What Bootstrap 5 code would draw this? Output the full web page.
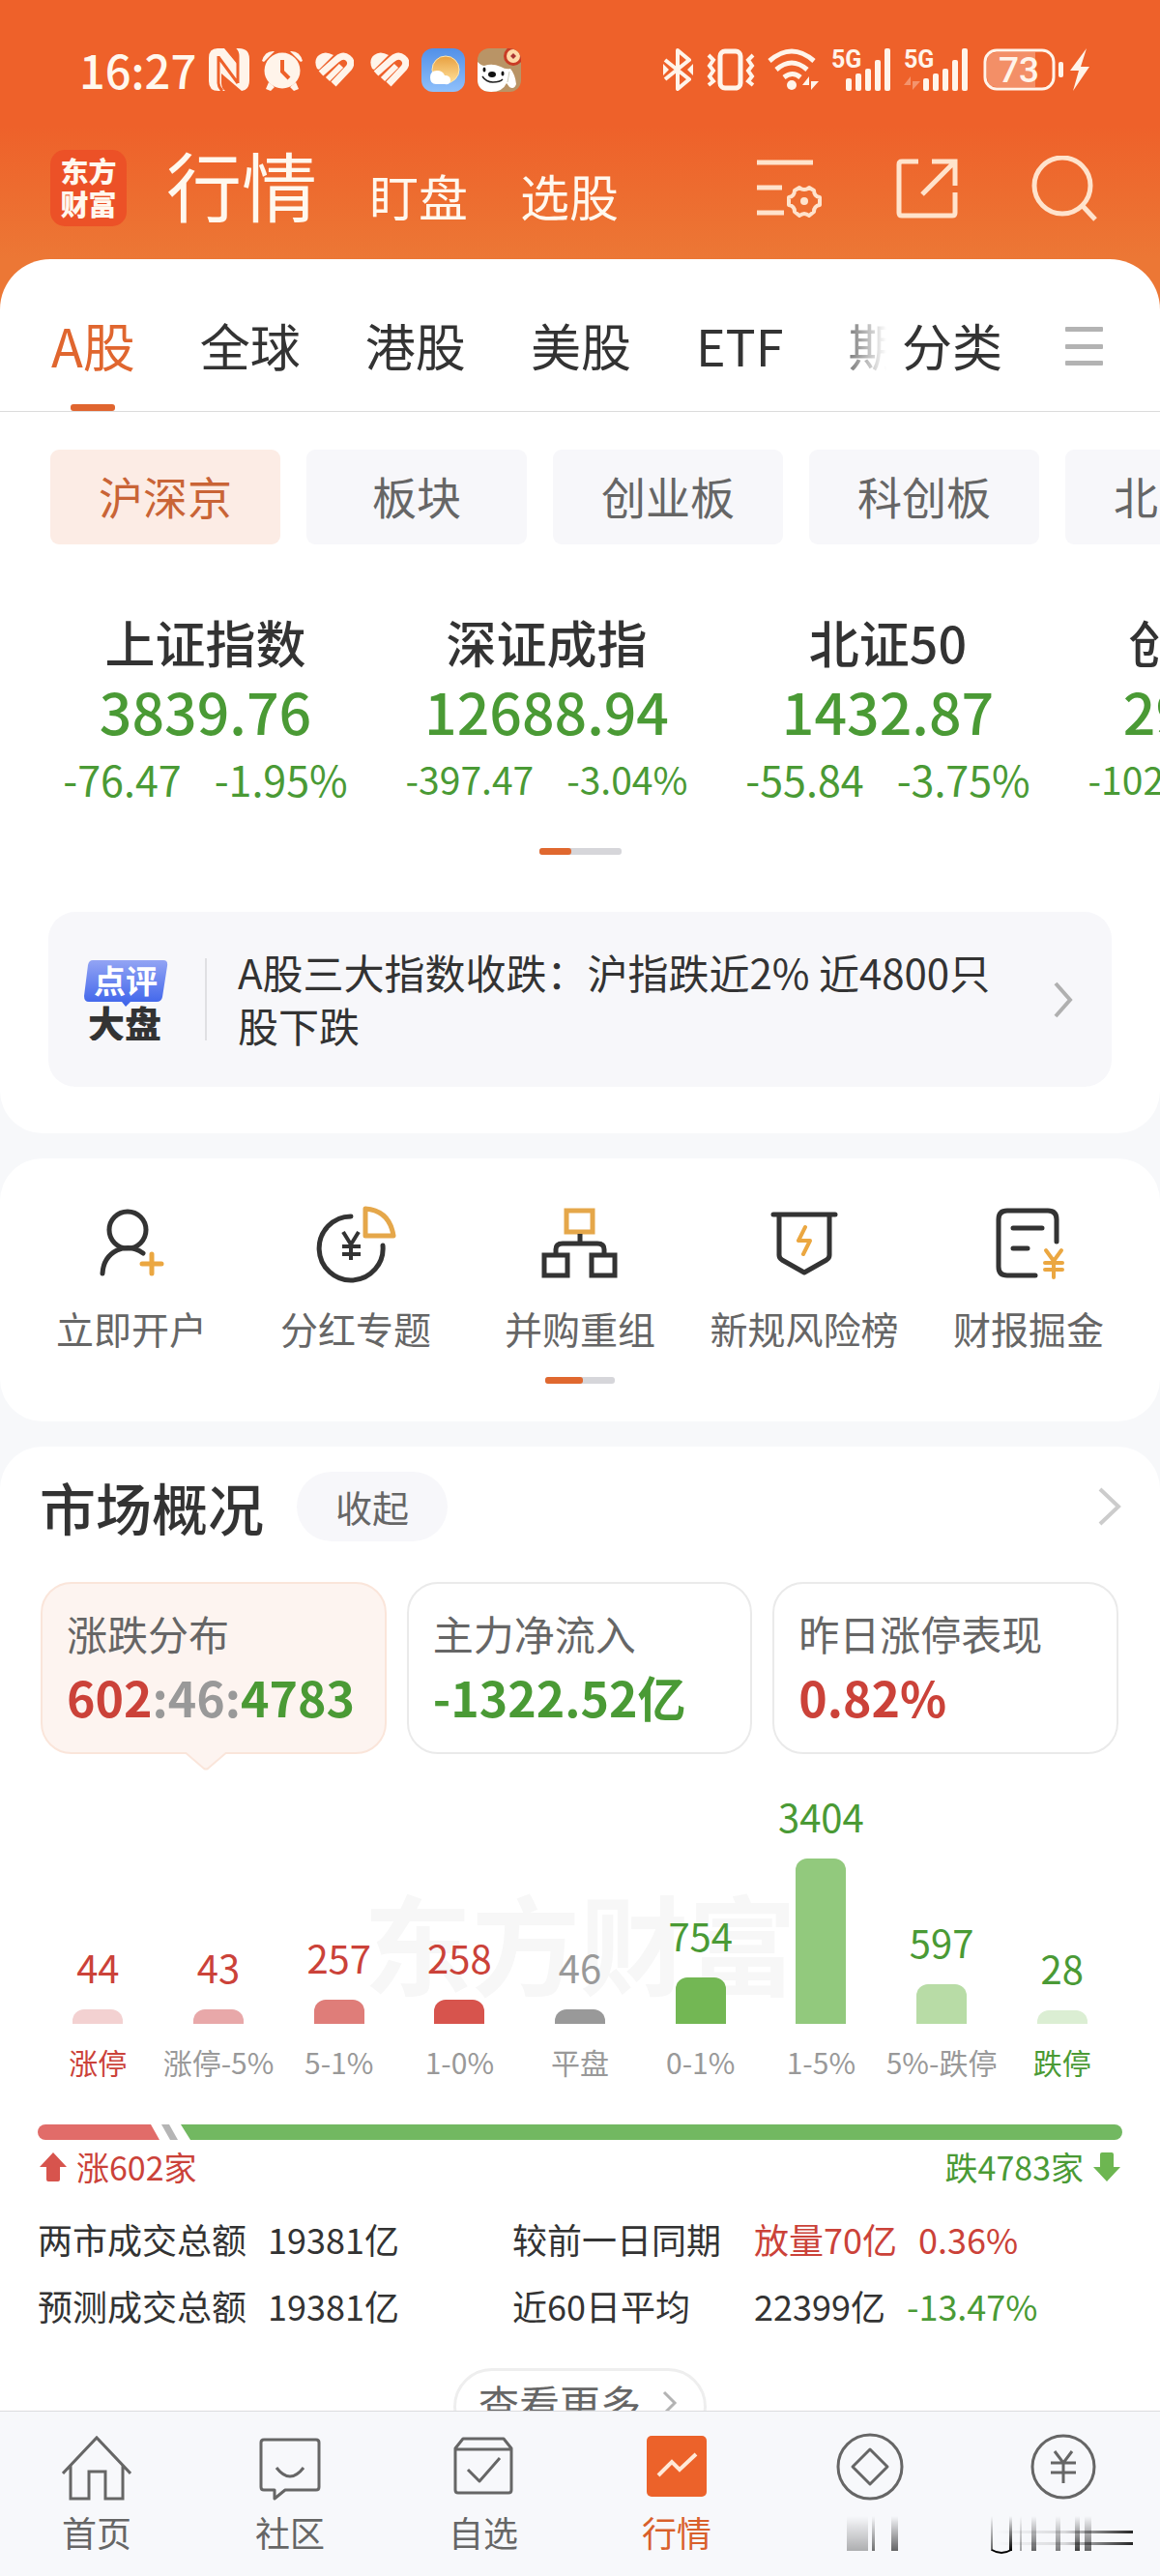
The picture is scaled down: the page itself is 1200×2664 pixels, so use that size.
<!DOCTYPE html>
<html lang="zh-CN">
<head>
<meta charset="utf-8">
<meta name="viewport" content="width=device-width, initial-scale=1">
<title>行情</title>
<link href="https://cdn.jsdelivr.net/npm/bootstrap@5.3.0/dist/css/bootstrap.min.css" rel="stylesheet">
<style>
:root{--ink:#333;--soft:#666;--brand:#e0662f;--up:#cb4239;--down:#4a9a35;--pale:#f7f7fa}
body{font-family:"Noto Sans CJK SC","Noto Sans",sans-serif;color:var(--ink);background:#f7f8fa;overflow-x:hidden}
a{color:inherit;text-decoration:none}
button{color:inherit;background:none;border:0;padding:0}
svg{display:block;flex:none}
.up{color:var(--up)}.down{color:var(--down)}.flat{color:#999}
.topbar{background:linear-gradient(#ee612a 0,#ee612a 130px,#ec7735 268px,#ec7735);color:#fff8ee;padding-bottom:60px;margin-bottom:-60px}
.status{height:144px;padding:0 73px 0 82px;gap:13px;font-size:47px;font-weight:500;line-height:60px}
.apphead{height:124px;padding:11px 65px 34px 52px}
.brandmark{width:79px;height:79px;border-radius:15px;background:#ec5127;font-size:29px;line-height:34px;font-weight:900;text-align:center;padding-top:4px}
.sections{gap:54px;margin-left:41px;padding-top:2px;font-size:51px;line-height:72px}
.sections .current{font-size:78px}
.tools{gap:76px}
.panel{background:#fff;border-radius:44px}
.market{border-radius:52px 52px 44px 44px}
.tabs{border-bottom:1px solid #dcdcdc;padding:0 59px 0 53px;height:158px;font-size:52px;line-height:60px}
.tabs button{padding-top:24px}
.tablist{gap:67px;overflow:hidden;flex:1 1 0;min-width:0;-webkit-mask-image:linear-gradient(90deg,#000 93%,transparent);mask-image:linear-gradient(90deg,#000 93%,transparent)}
.tablist a,.tabs .sorts{padding:59px 0 38px;white-space:nowrap}
.tablist .active{font-size:54px;color:var(--brand);position:relative}
.tablist .active::after{content:"";position:absolute;bottom:0;left:50%;width:46px;height:7px;margin-left:-23px;border-radius:3px;background:#e0652f}
.sorts{margin:0 65px 0 16px}
.chips{gap:27px;padding:39px 0 0 52px;overflow:hidden}
.chip{flex:none;min-width:228px;height:98px;padding:0 50px 4px;border-radius:9px;background:var(--pale);color:var(--soft);font-size:46px;line-height:60px;text-align:center}
.chip.active{background:#fcece5;color:#c96436}
.indices{padding:66px 0 0 36px;overflow:hidden}
.index{flex:none;width:353px;text-align:center;white-space:nowrap}
.index .title{font-size:52px;line-height:70px;font-weight:500;color:var(--ink)}
.index .value{font-size:59px;line-height:72px;font-weight:500}
.index .delta{font-size:43px;line-height:68px;gap:34px}
.index .delta.long{font-size:39px}
.pager{width:85px;height:7px;border-radius:3px;background:#d6d6da;margin:38px auto 0}
.pager i{display:block;width:33px;height:7px;border-radius:3px;background:#e0682f}
.review{margin:59px 50px 0;height:181px;border-radius:28px;background:var(--pale);padding:0 39px 0 36px}
.reviewmark{width:88px;height:84px}
.headline{font-size:42px;line-height:55px;border-left:2px solid #e0e0e3;padding-left:32px;margin:0 50px 0 38px;min-height:85px}
.headline span{display:block;margin:-14px 0 -11px}
.entries{margin-top:26px;padding:46px 20px 39px}
.entries a{flex:1 1 0;color:var(--soft);font-size:39px;line-height:50px;text-align:center;white-space:nowrap}
.entries svg{margin:0 auto 20px}
.short{width:72px;margin-top:26px}
.short i{width:39px}
.overview{margin-top:26px;padding:26px 39px 140px}
.overview h2{font-size:58px;line-height:72px;font-weight:500;margin:0 34px 0 2px}
.fold{width:156px;height:72px;border-radius:36px;background:var(--pale);color:var(--soft);font-size:38px;line-height:68px}
.cells{gap:21px;margin:42px 4px 0 3px}
.cell{flex:1 1 0;height:178px;padding:0 0 2px 25px;border:2px solid #eaeaea;border-radius:32px;position:relative;text-align:left;white-space:nowrap}
.cell .name{display:block;font-size:42px;line-height:50px;color:var(--soft)}
.cell .sum{display:block;font-size:50px;line-height:60px;margin-top:10px;font-weight:700}
.cell.active{background:#fdf4f0;border-color:#fae5da}
.cell svg{position:absolute;left:50%;top:174px;margin-left:-31px}
.chart{margin-top:40px;position:relative}
.stamp{position:absolute;left:0;right:0;top:78px;text-align:center;font-size:112px;line-height:150px;font-weight:700;color:#f7f7f7}
.slot{flex:1 1 0;position:relative;text-align:center;white-space:nowrap}
.slot b{display:block;font-size:40px;line-height:48px;font-weight:400}
.slot i{display:block;width:52px;margin:20px auto 19px;border-radius:12px 12px 0 0}
.slot span{display:block;margin:0 -20px;font-size:30px;line-height:40px}
.breadth{margin-top:45px;height:16px}
.breadth .rise{width:126px;background:#e16c69;border-radius:8px 0 0 8px;clip-path:polygon(0 0,117px 0,100% 100%,0 100%)}
.breadth .even{width:17px;margin-left:2px;background:#b5b5b5;clip-path:polygon(0 0,8px 0,100% 100%,9px 100%)}
.breadth .fall{flex:1;margin-left:3px;background:#72b861;border-radius:0 8px 8px 0;clip-path:polygon(0 0,100% 0,100% 100%,10px 100%)}
.counts{margin-top:6px;font-size:34px;line-height:44px;padding:0 2px}
.counts div{gap:10px}
.stats{width:100%;margin-top:18px;font-size:36px;line-height:69px;white-space:nowrap;table-layout:fixed}
.stats th{font-weight:400}.stats th,.stats td{padding:0}
.stats span{margin-right:22px}
.more{display:flex;align-items:center;margin:30px auto 0;width:262px;height:80px;border:3px solid #eee;border-radius:40px;color:var(--soft);font-size:42px;line-height:64px;padding:0 0 8px 23px;gap:22px}
.dock{background:#f7f8fb;border-top:1px solid #dcdcdf;height:171px;padding-top:22px}
.dock a{flex:1 1 0;text-align:center;color:var(--soft);font-size:36px;line-height:44px}
.dock a.active{color:#d9602b}
.dock a svg{margin:0 auto 8px}
.smear{position:absolute;right:24px;top:107px}
</style>
</head>
<body>
<header class="topbar">
  <div class="status d-flex align-items-center">
    <span>16:27</span>
    <svg width="42" height="44" viewBox="0 0 42 44" fill="#fff4ea"><path d="M9 0h7l14 17V8q0-5-4-8h5q11 0 11 11v22q0 10-8 11L13 26v10q0 5 4 8H10Q0 44 0 34V10Q0 0 9 0z"/><path d="M10 8v28q0 4 4 8M30 36V8q0-5-4-8M10 9l20 27" fill="none" stroke="#ee612a" stroke-width="3"/></svg>
    <svg width="42" height="44" viewBox="0 0 42 44"><g fill="#fff4ea"><circle cx="21" cy="23" r="18.500"/><path d="M0 13Q3 2 13 3L2 14zM42 13Q39 2 29 3l11 11zM7 35l6 5-4 4-5-2zM35 35l-6 5 4 4 5-2z"/></g><path d="M21 12v12l7 7" fill="none" stroke="#ee612a" stroke-width="4"/></svg>
    <svg width="40" height="36" viewBox="0 0 40 36"><path d="M2 17Q-2 8 4 3T19 3L4 18z" fill="#fff4ea"/><path d="M6 22L23 7q6-5 11-1t1 10L19 33" fill="none" stroke="#fff4ea" stroke-width="7"/><path d="M13 28l14-14" stroke="#fff4ea" stroke-width="6"/></svg>
    <svg width="40" height="36" viewBox="0 0 40 36" class="ms-1"><path d="M2 17Q-2 8 4 3T19 3L4 18z" fill="#fff4ea"/><path d="M6 22L23 7q6-5 11-1t1 10L19 33" fill="none" stroke="#fff4ea" stroke-width="7"/><path d="M13 28l14-14" stroke="#fff4ea" stroke-width="6"/></svg>
    <svg width="45" height="45" viewBox="0 0 45 45"><defs><linearGradient id="sky" x2="0" y2="1"><stop stop-color="#5290e8"/><stop offset="1" stop-color="#8fc0fb"/></linearGradient><linearGradient id="sun" x2="0" y2="1"><stop stop-color="#e8a040"/><stop offset="1" stop-color="#ffe09a"/></linearGradient></defs><rect width="45" height="45" rx="12" fill="url(#sky)"/><circle cx="25" cy="22" r="14" fill="url(#sun)" stroke="#ffe7b0"/><path d="M15 37q-6 0-6-7t7-7q6 0 8 5 6 0 6 5t-6 4z" fill="#fff"/></svg>
    <svg width="45" height="45" viewBox="0 0 45 45"><defs><clipPath id="sq"><rect width="45" height="45" rx="12"/></clipPath></defs><g clip-path="url(#sq)"><path d="M0 0h45v45H0z" fill="#b99466"/><path d="M0 14q4 4 7 4 8-3 17 1 5 3 10 2 5 6 6 16-2 6-7 3l-3-4q-4 9-16 9T0 38z" fill="#fff"/><path d="M33 24l-2 11" stroke="#ccb" stroke-width="1"/><circle cx="37" cy="8" r="10" fill="#c93b25"/><circle cx="37" cy="8" r="7" fill="#ffd9a8"/><path d="M37 5l3 3-3 3-3-3z" fill="#a33"/><ellipse cx="15" cy="27" rx="4" ry="3" fill="#111"/><ellipse cx="7" cy="22" rx="1.500" ry="2.500" fill="#111"/><ellipse cx="26" cy="26" rx="1.500" ry="2.500" fill="#111"/><path d="M5 29q4 6 11 6 7 0 10-3" fill="none" stroke="#222" stroke-width="1.500"/></g></svg>
    <svg class="ms-auto" width="33" height="44" viewBox="0 0 33 44" fill="none" stroke="#fff4ea" stroke-width="4" stroke-linejoin="round"><path d="M3 12l25 20-12 10V2l12 10L3 32"/><path d="M1 16v12l6-6zM32 16v12l-6-6z" fill="#fff4ea" stroke="none"/></svg>
    <svg width="50" height="44" viewBox="0 0 50 44" fill="none" stroke="#fff4ea"><rect x="14" y="3" width="21" height="38" rx="5" stroke-width="5"/><path d="M2 7l5 5-4 6 4 5-4 6 4 5-5 4M48 7l-5 5 4 6-4 5 4 6-4 5 5 4" stroke-width="4"/></svg>
    <svg width="53" height="44" viewBox="0 0 53 44" fill="none" stroke="#fff4ea" stroke-width="5"><path d="M2 13q23-20 46 0M9 22q16-14 32 0M17 30q9-7 17 0"/><circle cx="25" cy="38" r="5" fill="#fff4ea" stroke="none"/><path d="M36 38h7V29zM45 32v11l8-9h-8z" fill="#fff4ea" stroke="none"/></svg>
    <svg width="62" height="44" viewBox="0 0 62 44" fill="#fff4ea"><text x="0" y="20" font-size="25" font-weight="700" font-family="Roboto,sans-serif">5G</text><rect x="15" y="31" width="6" height="13" rx="2"/><rect x="25" y="26" width="6" height="18" rx="2"/><rect x="35" y="21" width="6" height="23" rx="2"/><rect x="45" y="12" width="6" height="32" rx="2"/><rect x="55" width="6" height="44" rx="2"/></svg>
    <svg width="69" height="44" viewBox="0 0 69 44" fill="#fff4ea"><text x="0" y="20" font-size="25" font-weight="700" font-family="Roboto,sans-serif">5G</text><path d="M0 38h7V29zM9 32v11l8-9H9z" opacity=".35"/><rect x="20" y="31" width="6" height="13" rx="2"/><rect x="30" y="26" width="6" height="18" rx="2"/><rect x="40" y="21" width="6" height="23" rx="2"/><rect x="50" y="12" width="6" height="32" rx="2"/><rect x="60" width="6" height="44" rx="2"/></svg>
    <svg width="110" height="44" viewBox="0 0 110 44" fill="#fff4ea"><path d="M14 4h40v36H14Q4 40 4 30V14Q4 4 14 4z" opacity=".32"/><rect x="2" y="2" width="71" height="40" rx="12" fill="none" stroke="#fff4ea" stroke-width="3"/><text x="16" y="35" font-size="37" font-weight="500" font-family="Roboto,sans-serif">73</text><rect x="78" y="14" width="5" height="16" rx="2"/><path d="M107 0L90 23h9l-6 21 17-25h-9z"/></svg>
  </div>
  <div class="apphead d-flex align-items-center">
    <div class="brandmark">东方<br>财富</div>
    <nav class="sections d-flex align-items-baseline"><a class="current" href="#">行情</a><a href="#">盯盘</a><a href="#">选股</a></nav>
    <div class="tools d-flex align-items-center ms-auto">
      <button aria-label="设置"><svg width="68" height="68" viewBox="0 0 68 68" fill="none" stroke="#ffe3cc" stroke-width="5"><path d="M0 7h58M0 33h26M0 59h28"/><path d="M44 33q5 4 10 0l5 3q0 6 6 7v8q-6 1-6 7l-5 4q-5-4-10 0l-5-4q0-6-6-7v-8q6-1 6-7z" stroke-width="4" stroke-linejoin="round"/><circle cx="49" cy="47" r="4" fill="#ffe3cc" stroke="none"/></svg></button>
      <button aria-label="分享"><svg width="64" height="68" viewBox="0 0 64 68" fill="none" stroke="#ffe3cc" stroke-width="5"><path d="M23 6H6q-3 0-3 3v50q0 3 3 3h52q3 0 3-3V38M37 6h24v25M61 6L27 40"/></svg></button>
      <button aria-label="搜索"><svg width="68" height="68" viewBox="0 0 68 68" fill="none" stroke="#ffe3cc" stroke-width="5"><circle cx="32" cy="31" r="29"/><path d="M53 52l13 14"/></svg></button>
    </div>
  </div>
</header>

<main>
<section class="panel market position-relative pb-5">
  <nav class="tabs d-flex align-items-center">
    <div class="tablist d-flex align-items-center"><a class="active" href="#">A股</a><a href="#">全球</a><a href="#">港股</a><a href="#">美股</a><a href="#">ETF</a><a href="#">期货</a></div>
    <a class="sorts" href="#">分类</a>
    <button aria-label="菜单"><svg width="39" height="42" viewBox="0 0 39 42" fill="#b3b3b3"><rect width="39" height="5" rx="1"/><rect y="18" width="39" height="5" rx="1"/><rect y="35" width="39" height="5" rx="1"/></svg></button>
  </nav>
  <div class="chips d-flex"><button class="chip active">沪深京</button><button class="chip">板块</button><button class="chip">创业板</button><button class="chip">科创板</button><button class="chip">北交所</button></div>
  <div class="indices d-flex">
    <a href="#" class="index down"><div class="title">上证指数</div><div class="value">3839.76</div><div class="delta d-flex justify-content-center"><span>-76.47</span><span>-1.95%</span></div></a>
    <a href="#" class="index down"><div class="title">深证成指</div><div class="value">12688.94</div><div class="delta long d-flex justify-content-center"><span>-397.47</span><span>-3.04%</span></div></a>
    <a href="#" class="index down"><div class="title">北证50</div><div class="value">1432.87</div><div class="delta d-flex justify-content-center"><span>-55.84</span><span>-3.75%</span></div></a>
    <a href="#" class="index down"><div class="title">创业板指</div><div class="value">2935.37</div><div class="delta long d-flex justify-content-center"><span>-102.49</span><span>-3.36%</span></div></a>
  </div>
  <div class="pager"><i></i></div>
  <a href="#" class="review d-flex align-items-center">
    <svg class="reviewmark" viewBox="0 0 88 84"><defs><linearGradient id="blue" x2="0" y2="1"><stop stop-color="#93a4f4"/><stop offset="1" stop-color="#3b62ea"/></linearGradient></defs><path d="M10 1h73q5 0 4 6l-5 32q-1 5-6 5H49l-5 5-4-5H6q-5 0-5-6L5 6q1-5 5-5z" fill="url(#blue)"/><text x="11" y="35" font-size="33" font-weight="700" fill="#fff">点评</text><text x="5" y="81" font-size="38" font-weight="900" fill="#333">大盘</text></svg>
    <div class="headline d-flex align-items-center"><span>A股三大指数收跌：沪指跌近2% 近4800只股下跌</span></div>
    <svg class="ms-auto" width="22" height="38" viewBox="0 0 22 38" fill="none" stroke="#b0b0b0" stroke-width="4"><path d="M3 2l15 17L3 36"/></svg>
  </a>
</section>

<section class="panel entries">
  <div class="d-flex">
    <a href="#"><svg width="84" height="84" viewBox="0 0 84 84" fill="none" stroke="#333" stroke-width="5" stroke-linecap="round"><circle cx="38" cy="28" r="19"/><path d="M12 73q1-17 15-24 14-6 27 3"/><path d="M63 53v20M53 63h20" stroke="#eba741"/></svg>立即开户</a>
    <a href="#"><svg width="84" height="84" viewBox="0 0 84 84" fill="none" stroke="#333" stroke-width="5"><path d="M37 14A33 33 0 1 0 70 44" stroke-linecap="round"/><path d="M52 6q25 2 29 28H52z" stroke="#e5a74a" stroke-linejoin="round"/><path d="M29 30l8 13 8-13M28 45h19M28 53h19M37 43v16" stroke-width="4"/></svg>分红专题</a>
    <a href="#"><svg width="84" height="84" viewBox="0 0 84 84" fill="none" stroke="#333" stroke-width="5"><path d="M28 8h27v22H28z" stroke="#e5a74a"/><path d="M42 32v9M17 53v-5q0-6 7-6h36q7 0 7 6v5M5 54h24v21H5zM54 54h24v21H54z"/></svg>并购重组</a>
    <a href="#"><svg width="84" height="84" viewBox="0 0 84 84" fill="none" stroke="#333" stroke-width="5" stroke-linecap="round" stroke-linejoin="round"><path d="M10 12h64M16 13v41q0 3 3 5l23 13 23-13q3-2 3-5V13"/><path d="M43 25l-7 14h12l-7 14" stroke="#eba741" stroke-width="4"/></svg>新规风险榜</a>
    <a href="#"><svg width="84" height="84" viewBox="0 0 84 84" fill="none" stroke="#333" stroke-width="5" stroke-linecap="round"><path d="M71 40V17q0-9-9-9H20q-9 0-9 9v49q0 9 9 9h29M26 26h30M26 47h15"/><path d="M60 49l8 11 8-11M59 62h18M59 69h18M68 60v17" stroke="#eba741" stroke-width="4"/></svg>财报掘金</a>
  </div>
  <div class="pager short"><i></i></div>
</section>

<section class="panel overview">
  <div class="d-flex align-items-center"><h2>市场概况</h2><button class="fold">收起</button><a href="#" class="ms-auto" aria-label="更多"><svg width="26" height="40" viewBox="0 0 26 40" fill="none" stroke="#ccc" stroke-width="4"><path d="M3 2l19 18L3 38"/></svg></a></div>
  <div class="cells d-flex">
    <button class="cell active"><span class="name">涨跌分布</span><span class="sum"><span class="up">602</span><span class="flat">:46:</span><span class="down">4783</span></span><svg width="46" height="20" viewBox="0 0 46 20" fill="#fdf4f0" stroke="#fae5da" stroke-width="2"><path d="M0-1l21 18q2 1 4 0L46-1"/></svg></button>
    <button class="cell"><span class="name">主力净流入</span><span class="sum down">-1322.52亿</span></button>
    <button class="cell"><span class="name">昨日涨停表现</span><span class="sum up">0.82%</span></button>
  </div>
  <div class="chart d-flex align-items-end">
    <div class="stamp" aria-hidden="true">东方财富</div>
    <div class="slot up"><b>44</b><i style="height:15px;background:#f3d1d1"></i><span>涨停</span></div>
    <div class="slot up"><b>43</b><i style="height:15px;background:#e8a8a9"></i><span class="flat">涨停-5%</span></div>
    <div class="slot up"><b>257</b><i style="height:25px;background:#df7d79"></i><span class="flat">5-1%</span></div>
    <div class="slot up"><b>258</b><i style="height:25px;background:#d7544d"></i><span class="flat">1-0%</span></div>
    <div class="slot flat"><b>46</b><i style="height:15px;background:#999"></i><span>平盘</span></div>
    <div class="slot down"><b>754</b><i style="height:48px;background:#73b754"></i><span class="flat">0-1%</span></div>
    <div class="slot down"><b>3404</b><i style="height:171px;background:#92c97d"></i><span class="flat">1-5%</span></div>
    <div class="slot down"><b>597</b><i style="height:41px;background:#b8dca6"></i><span class="flat">5%-跌停</span></div>
    <div class="slot down"><b>28</b><i style="height:14px;background:#dbeed3"></i><span>跌停</span></div>
  </div>
  <div class="breadth d-flex"><div class="rise"></div><div class="even"></div><div class="fall"></div></div>
  <div class="counts d-flex justify-content-between">
    <div class="d-flex align-items-center up"><svg width="28" height="30" viewBox="0 0 28 30" fill="#d7544d"><path d="M14 0l14 15h-7v13q0 2-2 2H9q-2 0-2-2V15H0z"/></svg>涨602家</div>
    <div class="d-flex align-items-center down">跌4783家<svg width="28" height="30" viewBox="0 0 28 30" fill="#6db651"><path d="M14 30L0 15h7V2q0-2 2-2h10q2 0 2 2v13h7z"/></svg></div>
  </div>
  <table class="stats">
    <colgroup><col style="width:238px"><col style="width:253px"><col style="width:250px"><col></colgroup>
    <tbody>
    <tr><th scope="row">两市成交总额</th><td>19381亿</td><th scope="row">较前一日同期</th><td class="up"><span>放量70亿</span>0.36%</td></tr>
    <tr><th scope="row">预测成交总额</th><td>19381亿</td><th scope="row">近60日平均</th><td><span>22399亿</span><b class="down fw-normal">-13.47%</b></td></tr>
    </tbody>
  </table>
  <button class="more">查看更多<svg width="16" height="26" viewBox="0 0 16 26" fill="none" stroke="#b3b3b3" stroke-width="3"><path d="M2 2l11 11L2 24"/></svg></button>
</section>
</main>

<nav class="dock fixed-bottom d-flex">
  <a href="#"><svg width="72" height="72" viewBox="0 0 72 72" fill="none" stroke="#666" stroke-width="3"><path d="M1 42L36 5l35 37M9 34v34h19V40h17v28h18V34"/></svg>首页</a>
  <a href="#"><svg width="72" height="72" viewBox="0 0 72 72" fill="none" stroke="#666" stroke-width="3" stroke-linejoin="round"><path d="M9 7h54q3 0 3 3v46q0 3-3 3H31l-11 9v-9H9q-3 0-3-3V10q0-3 3-3zM22 36q14 18 28 0"/></svg>社区</a>
  <a href="#"><svg width="72" height="72" viewBox="0 0 72 72" fill="none" stroke="#666" stroke-width="3" stroke-linejoin="round"><path d="M7 16l8-10h42l8 10v43q0 3-3 3H10q-3 0-3-3zM7 17h58M20 38l12 12 21-24"/></svg>自选</a>
  <a href="#" class="active"><svg width="72" height="72" viewBox="0 0 72 72"><rect x="5" y="3" width="62" height="63" rx="5" fill="#ec622a"/><path d="M17 44l14-14 8 8 17-16" fill="none" stroke="#ffe9d8" stroke-width="4"/></svg>行情</a>
  <a href="#" aria-label="理财"><svg width="72" height="72" viewBox="0 0 72 72" fill="none" stroke="#666" stroke-width="3"><circle cx="36" cy="35" r="33"/><path d="M36 17l18 18-18 18-18-18z" stroke-linejoin="round"/></svg></a>
  <a href="#" aria-label="交易"><svg width="72" height="72" viewBox="0 0 72 72" fill="none" stroke="#666" stroke-width="3"><circle cx="36" cy="35" r="32"/><path d="M27 19l9 12 9-12M23 31h26M23 41h26M36 31v21"/></svg></a>
  <svg class="smear" width="306" height="44" viewBox="0 0 306 44"><defs><linearGradient id="fade" x2="0" y2="1"><stop stop-color="#000" stop-opacity="0"/><stop offset="1" stop-color="#000"/></linearGradient><linearGradient id="side"><stop stop-color="#000" stop-opacity="0"/><stop offset=".5" stop-color="#000" stop-opacity=".15"/><stop offset="1" stop-color="#000"/></linearGradient></defs>
    <g fill="url(#fade)"><path d="M6 1h22v36H6z" opacity=".3"/><path d="M32 1h3v36h-3z" opacity=".55"/><path d="M52 1h7v36h-7z" opacity=".6"/><path d="M155 1h2v36h-2z" opacity=".6"/><path d="M174 1h3v36h-3z"/><path d="M185 1h2v36h-2z" opacity=".35"/><path d="M197 1h5v36h-5z" opacity=".6"/><path d="M222 1h5v36h-5z" opacity=".5"/><path d="M242 1h5v36h-5z" opacity=".75"/><path d="M252 1h7v36h-7z" opacity=".6"/></g>
    <path d="M156 36q10 6 20 0" fill="none" stroke="#000" stroke-width="2"/><path d="M160 16h142v3H160zM160 28h142v3H160z" fill="url(#side)" opacity=".85"/></svg>
</nav>
<script src="https://cdn.jsdelivr.net/npm/bootstrap@5.3.0/dist/js/bootstrap.bundle.min.js"></script>
</body>
</html>
